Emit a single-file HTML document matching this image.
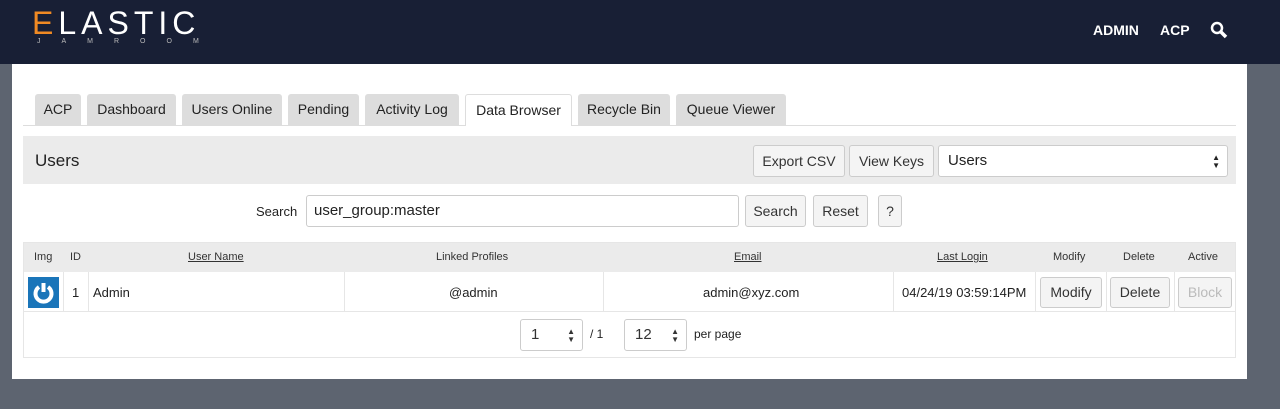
<!DOCTYPE html><html><head><style>
body{margin:0;width:1280px;height:409px;background:#5d6470;font-family:"Liberation Sans",sans-serif;overflow:hidden;position:relative;color:#222}
.hd{position:absolute;left:0;top:0;width:1280px;height:64px;background:#181f35}
.logo{position:absolute;left:32px;top:5px;color:#fff;font-size:32px;letter-spacing:5px}
.logo b{color:#f08a24;font-weight:normal}
.sub{position:absolute;left:37px;top:38px;color:#bbb;font-size:7px;letter-spacing:21px}
.nav{position:absolute;top:22px;color:#fff;font-size:14px;font-weight:bold}
.pn{position:absolute;left:12px;top:64px;width:1235px;height:315px;background:#fff}
.tab{position:absolute;top:94px;height:31px;background:#ddd;border-radius:3px 3px 0 0;font-size:14px;line-height:31px;text-align:center;color:#222}
.a{position:absolute}
.btn{position:absolute;background:#f4f4f4;border:1px solid #ccc;border-radius:3px;font-size:14px;text-align:center;box-sizing:border-box;color:#333}
.ar{position:absolute;right:7px;top:8px;font-size:8px;line-height:8px}
.th{position:absolute;top:251px;font-size:11px;color:#333}
.u{text-decoration:underline}
.vl{position:absolute;top:272px;height:40px;width:1px;background:#e6e6e6}
</style></head><body>
<div class="hd"><div class="logo"><b>E</b>LASTIC</div><div class="sub">JAMROOM</div>
<div class="nav" style="left:1093px">ADMIN</div><div class="nav" style="left:1160px">ACP</div>
<svg class="a" style="left:1210px;top:21px" width="18" height="18"><circle cx="7" cy="7" r="5" stroke="#fff" stroke-width="2.5" fill="none"/><line x1="10.5" y1="10.5" x2="16" y2="16" stroke="#fff" stroke-width="3.5"/></svg></div>
<div class="pn"></div>
<div class="a" style="left:23px;top:125px;width:1213px;height:1px;background:#ddd"></div>
<div class="tab" style="left:35px;width:46px">ACP</div>
<div class="tab" style="left:87px;width:89px">Dashboard</div>
<div class="tab" style="left:182px;width:100px">Users Online</div>
<div class="tab" style="left:288px;width:71px">Pending</div>
<div class="tab" style="left:365px;width:94px">Activity Log</div>
<div class="tab" style="left:465px;width:107px;background:#fff;border:1px solid #ddd;border-bottom:none;height:32px;box-sizing:border-box;line-height:30px">Data Browser</div>
<div class="tab" style="left:578px;width:92px">Recycle Bin</div>
<div class="tab" style="left:676px;width:110px">Queue Viewer</div>
<div class="a" style="left:23px;top:136px;width:1213px;height:48px;background:#ebebeb"></div>
<div class="a" style="left:35px;top:151px;font-size:17px">Users</div>
<div class="btn" style="left:753px;top:145px;width:92px;height:32px;line-height:30px">Export CSV</div>
<div class="btn" style="left:849px;top:145px;width:85px;height:32px;line-height:30px">View Keys</div>
<div class="btn" style="left:938px;top:145px;width:290px;height:32px;line-height:30px;background:#fff;text-align:left;padding-left:9px;font-size:15px;color:#222">Users<span class="ar">&#9650;<br>&#9660;</span></div>
<div class="a" style="left:256px;top:204px;font-size:13px">Search</div>
<div class="btn" style="left:306px;top:195px;width:433px;height:32px;line-height:30px;background:#fff;text-align:left;padding-left:7px;font-size:15px;color:#222">user_group:master</div>
<div class="btn" style="left:745px;top:195px;width:61px;height:32px;line-height:30px">Search</div>
<div class="btn" style="left:813px;top:195px;width:55px;height:32px;line-height:30px">Reset</div>
<div class="btn" style="left:878px;top:195px;width:24px;height:32px;line-height:30px">?</div>
<div class="a" style="left:23px;top:242px;width:1213px;height:116px;border:1px solid #e6e6e6;box-sizing:border-box"></div>
<div class="a" style="left:24px;top:243px;width:1211px;height:29px;background:#ebebeb"></div>
<div class="a" style="left:24px;top:311px;width:1211px;height:1px;background:#e6e6e6"></div>
<div class="th" style="left:34px">Img</div><div class="th" style="left:70px">ID</div>
<div class="th u" style="left:188px">User Name</div><div class="th" style="left:436px">Linked Profiles</div>
<div class="th u" style="left:734px">Email</div><div class="th u" style="left:937px">Last Login</div>
<div class="th" style="left:1053px">Modify</div><div class="th" style="left:1123px">Delete</div><div class="th" style="left:1188px">Active</div>
<div class="vl" style="left:63px"></div><div class="vl" style="left:88px"></div><div class="vl" style="left:344px"></div><div class="vl" style="left:603px"></div><div class="vl" style="left:893px"></div><div class="vl" style="left:1035px"></div><div class="vl" style="left:1106px"></div><div class="vl" style="left:1174px"></div>
<div class="a" style="left:28px;top:277px;width:31px;height:31px;background:#1a75b9"></div>
<svg class="a" style="left:28px;top:277px" width="31" height="31"><path d="M11 10A8 8 0 1 0 20 10" stroke="#fff" stroke-width="4" fill="none"/><line x1="15.5" y1="6" x2="15.5" y2="15" stroke="#fff" stroke-width="4"/></svg>
<div class="a" style="left:72px;top:285px;font-size:13px">1</div>
<div class="a" style="left:93px;top:285px;font-size:13px">Admin</div>
<div class="a" style="left:449px;top:285px;font-size:13px">@admin</div>
<div class="a" style="left:703px;top:285px;font-size:13px">admin@xyz.com</div>
<div class="a" style="left:902px;top:285px;font-size:13px">04/24/19 03:59:14PM</div>
<div class="btn" style="left:1040px;top:277px;width:62px;height:31px;line-height:29px">Modify</div>
<div class="btn" style="left:1110px;top:277px;width:60px;height:31px;line-height:29px">Delete</div>
<div class="btn" style="left:1178px;top:277px;width:54px;height:31px;line-height:29px;color:#bbb">Block</div>
<div class="btn" style="left:520px;top:319px;width:63px;height:32px;line-height:30px;background:#fff;text-align:left;padding-left:10px;font-size:15px">1<span class="ar">&#9650;<br>&#9660;</span></div>
<div class="a" style="left:590px;top:327px;font-size:12px">/ 1</div>
<div class="btn" style="left:624px;top:319px;width:63px;height:32px;line-height:30px;background:#fff;text-align:left;padding-left:10px;font-size:15px">12<span class="ar">&#9650;<br>&#9660;</span></div>
<div class="a" style="left:694px;top:327px;font-size:12px">per page</div>
</body></html>
